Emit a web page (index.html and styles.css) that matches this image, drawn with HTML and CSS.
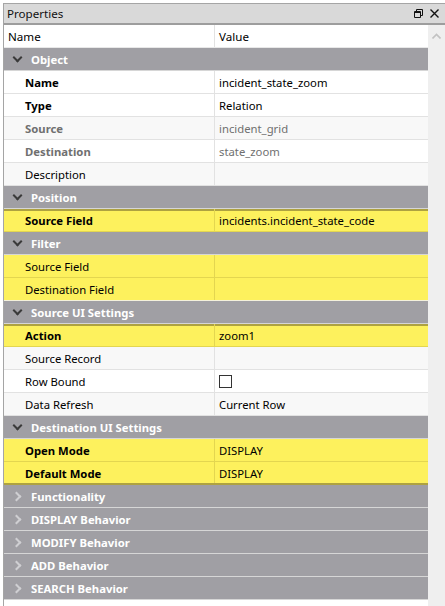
FILE: index.html
```html
<!DOCTYPE html>
<html>
<head>
<meta charset="utf-8">
<link rel="stylesheet" href="styles.css">
</head>
<body>
<div class="window">
  <div class="titlebar">
    <span class="title">Properties</span>
    <span class="tb-icons">
      <svg width="9" height="9" viewBox="0 0 9 9"><path d="M2.5 0.5h6v6h-2M0.5 2.5h6v6h-6z M2.5 0.5v2 M0.5 3.5h6" fill="none" stroke="#111" stroke-width="1"/></svg>
      <svg width="9" height="9" viewBox="0 0 9 9"><path d="M0.5 0.5l8 8M8.5 0.5l-8 8" fill="none" stroke="#111" stroke-width="1.4"/></svg>
    </span>
  </div>
  <div class="body">
    <div class="grid">
      <div class="row head"><div class="k">Name</div><div class="v">Value</div></div>

      <div class="row cat open"><span class="chev"></span>Object</div>
      <div class="row"><div class="k b">Name</div><div class="v">incident_state_zoom</div></div>
      <div class="row"><div class="k b">Type</div><div class="v">Relation</div></div>
      <div class="row alt"><div class="k b ro">Source</div><div class="v ro">incident_grid</div></div>
      <div class="row"><div class="k b ro">Destination</div><div class="v ro">state_zoom</div></div>
      <div class="row alt"><div class="k">Description</div><div class="v"></div></div>

      <div class="row cat open"><span class="chev"></span>Position</div>
      <div class="row yel top"><div class="k b">Source Field</div><div class="v">incidents.incident_state_code</div></div>

      <div class="row cat open"><span class="chev"></span>Filter</div>
      <div class="row yel"><div class="k">Source Field</div><div class="v"></div></div>
      <div class="row yel last"><div class="k">Destination Field</div><div class="v"></div></div>

      <div class="row cat open"><span class="chev"></span>Source UI Settings</div>
      <div class="row yel top"><div class="k b">Action</div><div class="v">zoom1</div></div>
      <div class="row alt"><div class="k">Source Record</div><div class="v"></div></div>
      <div class="row"><div class="k">Row Bound</div><div class="v"><span class="check"></span></div></div>
      <div class="row alt"><div class="k">Data Refresh</div><div class="v">Current Row</div></div>

      <div class="row cat open"><span class="chev"></span>Destination UI Settings</div>
      <div class="row yel"><div class="k b">Open Mode</div><div class="v">DISPLAY</div></div>
      <div class="row yel bottom"><div class="k b">Default Mode</div><div class="v">DISPLAY</div></div>

      <div class="row cat"><span class="chev"></span>Functionality</div>
      <div class="row cat"><span class="chev"></span>DISPLAY Behavior</div>
      <div class="row cat"><span class="chev"></span>MODIFY Behavior</div>
      <div class="row cat"><span class="chev"></span>ADD Behavior</div>
      <div class="row cat"><span class="chev"></span>SEARCH Behavior</div>
    </div>
    <div class="scroll">
      <svg width="9" height="6" viewBox="0 0 9 6"><path d="M0.5 5.5l4-4 4 4" fill="none" stroke="#c2c2c2" stroke-width="1.6"/></svg>
    </div>
  </div>
</div>
</body>
</html>
```
FILE: styles.css
```css
html, body {
  margin: 0;
  padding: 0;
  background: #ffffff;
}
body {
  font-family: "Noto Sans", "Open Sans", sans-serif;
  font-size: 11.3px;
  color: #000;
}
.window {
  margin: 3px 0 0 3px;
  width: 442px;
  height: 603px;
  border-left: 1px solid #a5a5a5;
  border-top: 1px solid #a5a5a5;
  display: flex;
  flex-direction: column;
  box-sizing: border-box;
}
.titlebar {
  height: 19px;
  background: #d9d9d9;
  border-bottom: 2px solid #9d9d9d;
  display: flex;
  align-items: center;
  justify-content: space-between;
  padding: 0 6px 0 3px;
}
.title {
  line-height: 20px;
  font-size: 11.6px;
  color: #111;
}
.tb-icons {
  display: flex;
  gap: 7px;
  align-items: center;
}
.body {
  flex: 1;
  display: flex;
  background: #fff;
}
.grid {
  width: 424px;
  display: flex;
  flex-direction: column;
}
.scroll {
  flex: 1;
  background: #efefef;
  display: flex;
  justify-content: center;
  padding-top: 8px;
  align-items: flex-start;
}
.row {
  height: 22px;
  border-bottom: 1px solid #e2e2e2;
  display: grid;
  grid-template-columns: 211px 1fr;
  line-height: 24px;
  background: #fff;
  overflow: hidden;
}
.row .k {
  padding-left: 21px;
  border-right: 1px solid #e2e2e2;
  white-space: nowrap;
  overflow: hidden;
}
.row .v {
  padding-left: 4px;
  white-space: nowrap;
  overflow: hidden;
}
.row.head .k {
  padding-left: 4px;
}
.row.head {
  border-bottom: 1px solid #e8e8e8;
  font-size: 11.6px;
}
.b { font-weight: 700; }
.ro { color: #707070; }
.row.alt { background: #f8f8f8; }
.row.yel {
  background: #fdf15d;
  border-bottom-color: #e3d650;
}
.row.yel .k { border-right-color: #e3d650; }
.row.yel.top { box-shadow: inset 0 2px 0 #aea241; }
.row.yel.last { border-bottom-color: #f4f1dc; }
.row.yel.bottom { border-bottom: 2px solid #aea241; height: 21px; }
.row.cat {
  display: flex;
  align-items: center;
  background: #a09fa4;
  border-bottom: 1px solid #d6d6d6;
  color: #fff;
  font-weight: 700;
  padding-left: 27px;
  position: relative;
  line-height: 22px;
  padding-top: 1px;
  height: 21px;
}
.chev {
  position: absolute;
  left: 9px;
  top: 8px;
  width: 5px;
  height: 5px;
  border-right: 2px solid #cfcfd2;
  border-bottom: 2px solid #cfcfd2;
  transform: rotate(-45deg);
}
.row.cat.open .chev {
  left: 10px;
  top: 6px;
  border-color: #3a3a3a;
  transform: rotate(45deg);
}
.check {
  display: inline-block;
  width: 11px;
  height: 11px;
  border: 1px solid #333;
  vertical-align: middle;
  margin-top: -2px;
}
```
